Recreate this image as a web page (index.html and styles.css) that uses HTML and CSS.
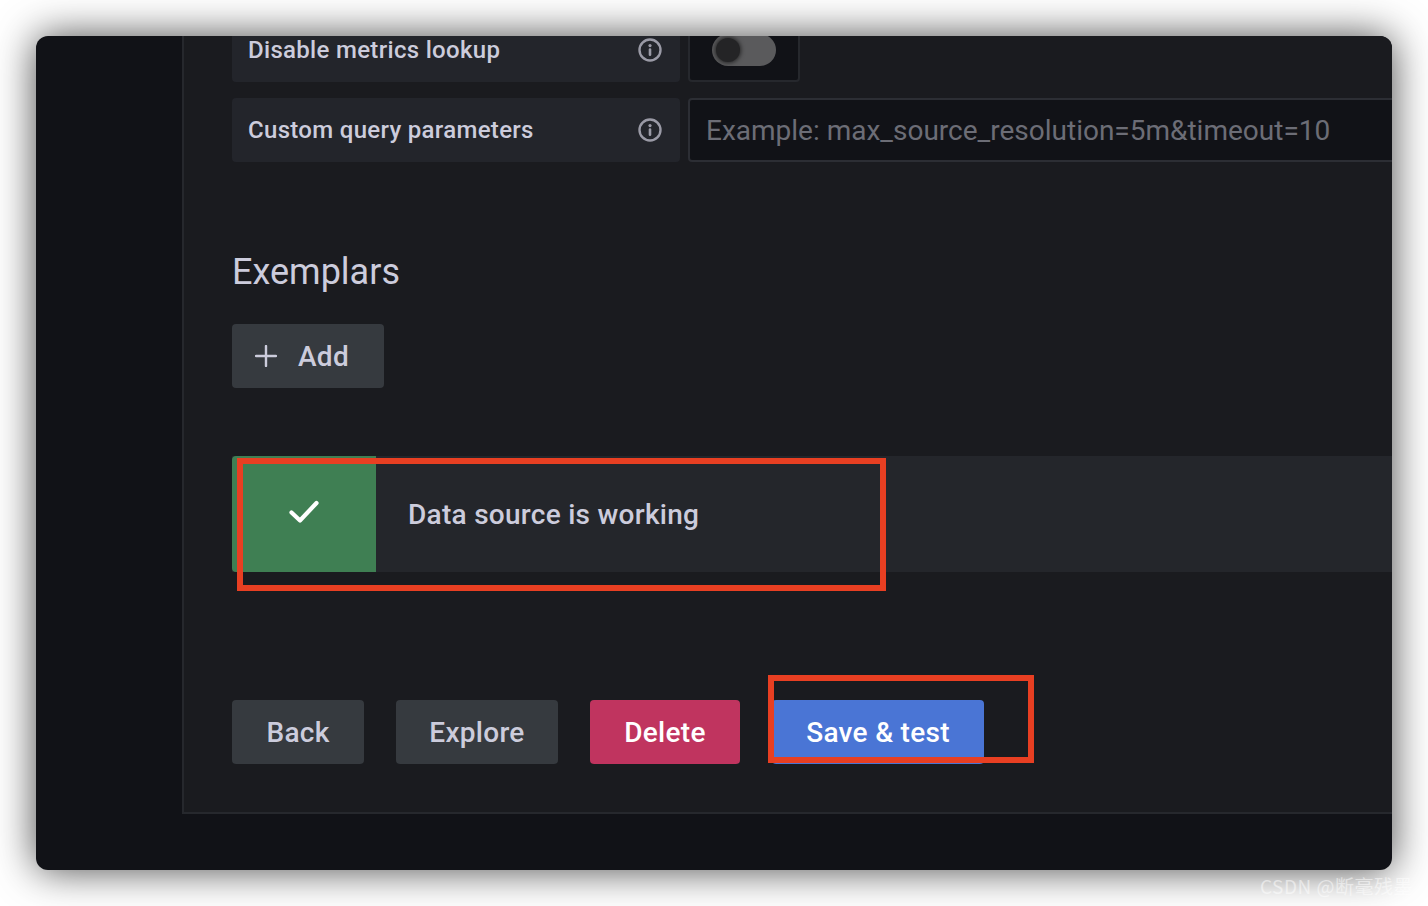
FILE: index.html
```html
<!DOCTYPE html>
<html lang="en">
<head>
<meta charset="utf-8">
<title>Data source settings</title>
<link rel="stylesheet" href="styles.css">
</head>
<body>
<div class="window">
  <aside class="sidebar"></aside>
  <div class="column">
    <main class="main">
      <div class="content">
        <div class="row">
          <div class="label"><span>Disable metrics lookup</span>
            <svg class="info" viewBox="0 0 24 24"><circle cx="12" cy="12" r="10.500" fill="none" stroke="currentColor" stroke-width="2.400"/><path d="M12 11.500v5.200" stroke="currentColor" stroke-width="2.600" stroke-linecap="round"/><circle cx="12" cy="7.600" r="1.600" fill="currentColor"/></svg>
          </div>
          <div class="switch-cell"><div class="track"><div class="knob"></div></div></div>
        </div>
        <div class="row">
          <div class="label"><span>Custom query parameters</span>
            <svg class="info" viewBox="0 0 24 24"><circle cx="12" cy="12" r="10.500" fill="none" stroke="currentColor" stroke-width="2.400"/><path d="M12 11.500v5.200" stroke="currentColor" stroke-width="2.600" stroke-linecap="round"/><circle cx="12" cy="7.600" r="1.600" fill="currentColor"/></svg>
          </div>
          <div class="input">Example: max_source_resolution=5m&amp;timeout=10</div>
        </div>
        <h2 class="heading">Exemplars</h2>
        <button class="btn add">
          <svg class="plus" viewBox="0 0 22 22"><path d="M11 1v20M1 11h20" stroke="currentColor" stroke-width="2.400" stroke-linecap="round"/></svg>
          <span>Add</span>
        </button>
        <div class="alert">
          <div class="alert-icon">
            <svg class="check" viewBox="0 0 30 24"><path d="M2.500 12.500l8.500 8L27.500 3" fill="none" stroke="currentColor" stroke-width="4.200" stroke-linecap="round" stroke-linejoin="round"/></svg>
          </div>
          <div class="alert-text">Data source is working</div>
        </div>
        <div class="actions">
          <button class="btn back">Back</button>
          <button class="btn explore">Explore</button>
          <button class="btn delete">Delete</button>
          <button class="btn save">Save &amp; test</button>
        </div>
      </div>
    </main>
  </div>
</div>
<div class="mark mark-alert"></div>
<div class="mark mark-save"></div>
<div class="watermark">CSDN @断毫残墨</div>
</body>
</html>
```
FILE: styles.css
```css
* { box-sizing: border-box; }
html, body { margin: 0; height: 100%; }
body {
  position: relative;
  height: 906px;
  padding: 36px;
  background: #fff;
  overflow: hidden;
  font-family: Roboto, "Noto Sans CJK SC", sans-serif;
  color: #ccccdc;
}
.window {
  position: relative;
  display: flex;
  height: 834px;
  background: #111217;
  border-radius: 12px;
  overflow: hidden;
  box-shadow: 0 0 40px rgba(0, 0, 0, .72);
}
.sidebar { width: 146px; flex: none; }
.column { flex: 1; min-width: 0; }
.main {
  height: 778px;
  background: #1a1b1f;
  border-left: 2px solid #26282d;
  border-bottom: 2px solid #26282d;
  overflow: hidden;
}
.content {
  margin-top: -18px;
  margin-right: -40px;
  padding-left: 48px;
}
.row { display: flex; gap: 8px; margin-bottom: 16px; height: 64px; }
.label {
  width: 448px;
  flex: none;
  display: flex;
  align-items: center;
  justify-content: space-between;
  padding: 0 18px 0 16px;
  background: #23252b;
  border-radius: 4px;
  font-size: 24px;
  font-weight: 500;
  letter-spacing: .31px;
}
.info { width: 24px; height: 24px; color: #9a9aa6; }
.switch-cell {
  width: 112px;
  display: flex;
  align-items: center;
  padding-left: 22px;
  background: #111217;
  border: 2px solid #26282d;
  border-radius: 4px;
}
.track {
  width: 64px;
  height: 32px;
  padding: 4px;
  border-radius: 16px;
  background: #5a5a5c;
}
.knob {
  width: 24px;
  height: 24px;
  border-radius: 50%;
  background: #242426;
  box-shadow: 0 0 4px 1px rgba(0, 0, 0, .6);
}
.input {
  flex: 1;
  display: flex;
  align-items: center;
  padding-left: 16px;
  background: #111217;
  border: 2px solid #2c2e34;
  border-radius: 4px;
  font-size: 28px;
  color: #6c6d76;
}
.heading {
  margin: 88px 0 30px;
  font-size: 36px;
  line-height: 44px;
  font-weight: 400;
  color: #ccccdc;
}
.btn {
  display: inline-flex;
  align-items: center;
  justify-content: center;
  height: 64px;
  border: 0;
  border-radius: 4px;
  background: #363a3f;
  color: #ccccdc;
  font-family: inherit;
  font-size: 28px;
  font-weight: 500;
  letter-spacing: .28px;
}
.add { width: 152px; justify-content: flex-start; padding-left: 23px; gap: 21px; }
.plus { width: 22px; height: 22px; }
.alert {
  display: flex;
  align-items: center;
  height: 116px;
  margin-top: 68px;
  background: #24262b;
}
.alert-icon {
  width: 144px;
  height: 116px;
  display: flex;
  align-items: center;
  justify-content: center;
  background: #3f7f53;
  border-radius: 4px 0 0 4px;
  color: #fff;
}
.check { width: 30px; height: 24px; margin-bottom: 4px; }
.alert-text {
  padding-left: 32px;
  font-size: 28px;
  font-weight: 500;
  letter-spacing: .28px;
}
.actions { display: flex; gap: 32px; margin-top: 128px; }
.back { width: 132px; }
.explore { width: 162px; }
.delete { width: 150px; background: #c0345f; color: #fff; }
.save { width: 212px; background: #4a75d5; color: #fff; }
.mark {
  position: absolute;
  border: 6px solid #e83f22;
}
.mark-alert { left: 237px; top: 458px; width: 649px; height: 133px; }
.mark-save { left: 768px; top: 675px; width: 266px; height: 88px; }
.watermark {
  position: absolute;
  left: 1260px;
  top: 873px;
  font-family: "Noto Sans CJK SC", sans-serif;
  font-size: 19px;
  line-height: 26px;
  letter-spacing: .5px;
  color: rgba(255, 255, 255, .5);
  white-space: nowrap;
}
```
